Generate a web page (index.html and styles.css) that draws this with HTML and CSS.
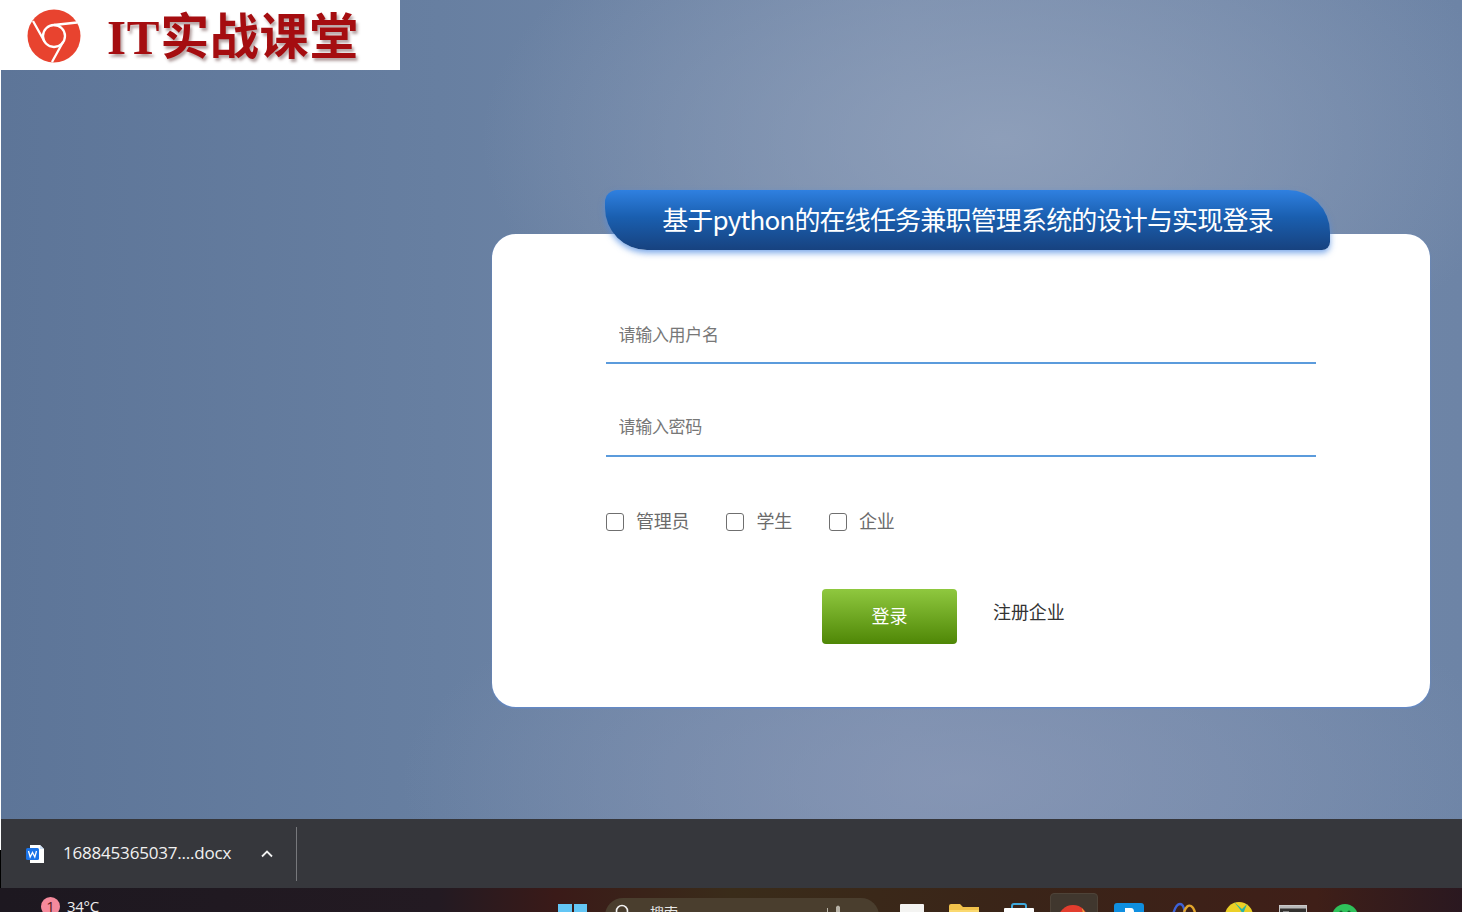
FILE: index.html
```html
<!DOCTYPE html>
<html lang="zh-CN">
<head>
<meta charset="utf-8">
<title>登录</title>
<link rel="stylesheet" href="styles.css">
</head>
<body>
<main class="stage">
  <div class="logo">
    <svg class="logo-mark" viewBox="0 0 54 54" width="54" height="54">
      <circle cx="27" cy="27" r="26.5" fill="#e8432f"/>
      <circle cx="27" cy="27" r="11" fill="none" stroke="#fff" stroke-width="2.3"/>
      <path d="M27 16 50 13.5M17.5 32.5 6 12M36 33 25 53" fill="none" stroke="#fff" stroke-width="2.3"/>
    </svg>
    <span class="logo-text">IT实战课堂</span>
  </div>
  <section class="card">
    <h1 class="tab">基于python的在线任务兼职管理系统的设计与实现登录</h1>
    <form class="form">
      <input class="field" type="text" placeholder="请输入用户名">
      <input class="field field-second" type="password" placeholder="请输入密码">
      <div class="roles">
        <label class="role role-admin"><span class="box"></span><span class="role-text">管理员</span></label>
        <label class="role role-student"><span class="box"></span><span class="role-text">学生</span></label>
        <label class="role"><span class="box"></span><span class="role-text">企业</span></label>
      </div>
      <div class="actions">
        <button class="login" type="button">登录</button>
        <a class="register">注册企业</a>
      </div>
    </form>
  </section>
</main>
<div class="downloads">
  <svg class="doc-icon" viewBox="0 0 20 20" width="20" height="20">
    <path d="M5 1H15L19 5V19H5Z" fill="#fff"/>
    <path d="M15 1L19 5H15Z" fill="#cfe0f5"/>
    <rect x="1" y="4" width="13" height="12" rx="1.5" fill="#1a73e8"/>
    <path d="M3.5 7 5.2 13 7.5 8.5 9.8 13 11.5 7" fill="none" stroke="#fff" stroke-width="1.3"/>
  </svg>
  <span class="file-name">168845365037....docx</span>
  <svg class="chevron" viewBox="0 0 12 8" width="12" height="8">
    <path d="M1 6.5 6 1.5 11 6.5" fill="none" stroke="#f1f1f1" stroke-width="1.8"/>
  </svg>
  <span class="divider"></span>
</div>
<footer class="taskbar">
  <div class="weather"><span class="badge">1</span><span>34°C</span></div>
  <div class="win"><i></i><i></i></div>
  <div class="search">
    <svg class="search-icon" viewBox="0 0 16 16" width="16" height="16">
      <circle cx="7" cy="7" r="5.5" fill="none" stroke="#f2f2f2" stroke-width="1.6"/>
    </svg>
    <span class="search-text">搜索</span>
    <svg class="tower" viewBox="0 0 24 14" width="24" height="14">
      <path d="M3 14V7H5V3H6V7H8V14ZM14 14V2Q16 -1 18 2V14Z" fill="#b9b4a8"/>
    </svg>
  </div>
  <svg class="tb tb-note" viewBox="0 0 24 12" width="24" height="12"><rect width="24" height="12" rx="1" fill="#f4f4f2"/></svg>
  <svg class="tb tb-folder" viewBox="0 0 32 12" width="32" height="12"><path d="M1 12V2Q1 0 3 0H12L15 3H31V12Z" fill="#f2c24b"/><path d="M1 12V6H31V12Z" fill="#fbd96f"/></svg>
  <svg class="tb tb-bag" viewBox="0 0 30 14" width="30" height="14"><path d="M8 7V3Q8 1 10 1H20Q22 1 22 3V7" fill="none" stroke="#3fa9dc" stroke-width="2"/><rect y="5" width="30" height="9" rx="1" fill="#fff"/></svg>
  <div class="active-slot">
    <svg viewBox="0 0 30 14" width="30" height="14"><circle cx="15" cy="15" r="15" fill="#e23d2e"/><circle cx="15" cy="15" r="6" fill="#f5d9c8"/><path d="M24 3 30 12 26 14Z" fill="#f3b33d"/></svg>
  </div>
  <svg class="tb tb-p" viewBox="0 0 30 15" width="30" height="15"><path d="M0 15V3Q0 0 3 0H27Q30 0 30 3V15Z" fill="#0f8fe0"/><path d="M11 15V5H17Q20 5 20 9T17 13H14V15Z" fill="#fff"/></svg>
  <svg class="tb tb-arc" viewBox="0 0 28 17" width="28" height="17"><path d="M2 17Q5 2 10 2T15 17" fill="none" stroke="#3d62d8" stroke-width="2.4"/><path d="M14 10Q17 2 21 4T26 17" fill="none" stroke="#e2a62c" stroke-width="2.4"/></svg>
  <svg class="tb tb-ball" viewBox="0 0 28 16" width="28" height="16"><circle cx="14" cy="14" r="14" fill="#ecd026"/><path d="M9 0 17 7 22 2 18 12 14 6Z" fill="#27b4a6"/></svg>
  <svg class="tb tb-term" viewBox="0 0 28 12" width="28" height="12"><rect x=".5" y=".5" width="27" height="12" fill="#33312f" stroke="#c9c9c9"/><rect x="1" y="1" width="26" height="2.5" fill="#b9b9b9"/><path d="M4 7H10" stroke="#ddd"/></svg>
  <svg class="tb tb-chat" viewBox="0 0 26 14" width="26" height="14"><circle cx="13" cy="13" r="13" fill="#2fc25b"/><circle cx="9" cy="8" r="1.6" fill="#14632e"/><circle cx="17" cy="8" r="1.6" fill="#14632e"/></svg>
</footer>
</body>
</html>
```
FILE: styles.css
```css
* { box-sizing: border-box; }
html, body { margin: 0; height: 912px; overflow: hidden; }
body {
  display: flex;
  flex-direction: column;
  font-family: "Noto Sans CJK SC", "Liberation Sans", sans-serif;
  background: #1b1a1d;
}
.stage {
  position: relative;
  height: 819px;
  display: flex;
  justify-content: flex-end;
  align-items: flex-start;
  padding: 234px 32px 0 0;
  border-left: 1px solid #fff;
  background:
    radial-gradient(ellipse 520px 280px at 1000px 140px, rgba(146,162,188,.85), rgba(146,162,188,0) 100%),
    radial-gradient(ellipse 560px 230px at 960px 780px, rgba(140,154,184,.7), rgba(140,154,184,0) 100%),
    linear-gradient(90deg, #5d7598 0%, #677fa1 30%, #768bab 62%, #6d84a6 100%);
}
.logo {
  position: absolute;
  top: 0;
  left: -1px;
  width: 400px;
  height: 70px;
  padding-left: 27px;
  display: flex;
  align-items: center;
  background: #fff;
}
.logo-mark { flex: none; margin-top: 2px; }
.logo-text {
  margin: 5px 0 0 26px;
  font-family: "Liberation Serif", "Noto Sans CJK SC", serif;
  font-size: 49px;
  font-weight: 700;
  line-height: 65px;
  letter-spacing: .7px;
  white-space: nowrap;
  color: #a50d10;
  text-shadow: 2px 3px 3px rgba(90,50,50,.45);
}
.card {
  position: relative;
  width: 938px;
  height: 473px;
  padding: 0 114px;
  background: #fff;
  border-radius: 24px;
  box-shadow: 0 1px 2px #5f8ad0;
}
.tab {
  position: absolute;
  top: -44px;
  left: 113px;
  width: 725px;
  height: 60px;
  margin: 0;
  padding: 13px 0 0 0;
  text-align: center;
  font-size: 26px;
  font-weight: 400;
  line-height: 32px;
  letter-spacing: -.82px;
  white-space: nowrap;
  color: #fff;
  background: linear-gradient(#2f80e0, #1a5fb0 45%, #17427f);
  border-radius: 12px 42px 8px 42px;
  box-shadow: 0 3px 6px rgba(80,140,225,.75);
}
.form { display: flex; flex-direction: column; }
.field {
  display: block;
  width: 710px;
  height: 60px;
  margin-top: 70px;
  padding: 0 12.5px;
  border: 0;
  border-bottom: 2px solid #5b9bdc;
  outline: 0;
  background: transparent;
  font: inherit;
  font-size: 17px;
  letter-spacing: -.3px;
  color: #333;
}
.field-second { margin-top: 33px; padding-bottom: 2px; }
.field::placeholder { color: #777; opacity: 1; }
.roles {
  display: flex;
  align-items: center;
  height: 26px;
  margin-top: 52px;
  font-size: 18px;
  letter-spacing: -.2px;
  color: #6b6b6b;
}
.role { display: flex; align-items: center; white-space: nowrap; }
.role-text { margin-bottom: 4px; }
.role-admin { margin-right: 37px; }
.role-student { margin-right: 37px; }
.box {
  width: 18px;
  height: 18px;
  margin-right: 12px;
  border: 1.5px solid #6f6f6f;
  border-radius: 3px;
  background: #fff;
}
.actions {
  display: flex;
  align-items: flex-start;
  margin-top: 54px;
  padding-left: 216px;
}
.login {
  width: 135px;
  height: 55px;
  border: 0;
  border-radius: 4px;
  background: linear-gradient(#8fc83f, #4f8706);
  font: inherit;
  font-size: 18px;
  color: #fff;
  padding: 0 0 4px;
}
.register {
  margin: 8px 0 0 36px;
  font-size: 18px;
  line-height: 28px;
  letter-spacing: -.1px;
  color: #333;
}
.downloads {
  height: 69px;
  display: flex;
  align-items: center;
  padding-left: 25px;
  background:
    linear-gradient(#fff, #fff) 0 0 / 1px 31px no-repeat,
    linear-gradient(#000, #000) 0 31px / 1px 100% no-repeat,
    #36373c;
  color: #f1f1f1;
  font-family: "Open Sans", "Liberation Sans", sans-serif;
}
.doc-icon { flex: none; }
.file-name {
  width: 180px;
  margin: -2px 0 0 18px;
  font-size: 17px;
  letter-spacing: -.2px;
  white-space: nowrap;
}
.chevron { flex: none; margin-left: 18px; }
.divider {
  width: 1px;
  height: 54px;
  margin-left: 23px;
  background: #77787c;
}
.taskbar {
  position: relative;
  height: 24px;
  display: flex;
  align-items: flex-start;
  overflow: hidden;
  background: linear-gradient(90deg, #1d1820 0%, #231a22 30%, #3a1a18 38%, #3a2c1a 50%, #3a2418 70%, #3f1f18 90%, #2a1820 100%);
  color: #eee;
  font-family: "Open Sans", "Liberation Sans", sans-serif;
}
.weather {
  display: flex;
  align-items: center;
  gap: 7px;
  margin: 8px 0 0 41px;
  font-size: 15px;
  letter-spacing: -.3px;
  line-height: 20px;
  width: 517px;
}
.badge {
  width: 19px;
  height: 19px;
  border-radius: 50%;
  background: #f58a9c;
  color: #5a1a20;
  font-size: 15px;
  line-height: 19px;
  text-align: center;
}
.win {
  flex: none;
  width: 29px;
  height: 30px;
  margin-top: 16px;
  display: flex;
  gap: 2px;
}
.win i { flex: 1; height: 13px; background: #63c6f5; }
.search {
  flex: none;
  width: 274px;
  height: 36px;
  margin: 10px 0 0 18px;
  padding-left: 10px;
  display: flex;
  align-items: flex-start;
  border-radius: 18px;
  background: #4a3e2e;
}
.search-icon { flex: none; margin-top: 6px; }
.search-text {
  width: 172px;
  margin: 4px 0 0 19px;
  font-family: "Noto Sans CJK SC", sans-serif;
  font-size: 14px;
  line-height: 20px;
  color: #e8e8e8;
}
.tower { flex: none; margin-top: 7px; }
.tb { flex: none; margin-top: 16px; }
.tb-note { margin-left: 21px; }
.tb-folder { margin-left: 24px; }
.tb-bag { margin-left: 24px; margin-top: 15px; }
.active-slot {
  flex: none;
  width: 48px;
  height: 30px;
  margin: 5px 0 0 16px;
  padding: 11px 0 0 7px;
  border: 1px solid #4e4338;
  border-radius: 4px;
  background: #40372e;
}
.active-slot svg { display: block; }
.tb-p { margin-left: 16px; margin-top: 15px; }
.tb-arc { margin-left: 26px; margin-top: 14px; }
.tb-ball { margin-left: 27px; margin-top: 14px; }
.tb-term { margin-left: 26px; margin-top: 17px; }
.tb-chat { margin-left: 25px; margin-top: 16px; }
```
